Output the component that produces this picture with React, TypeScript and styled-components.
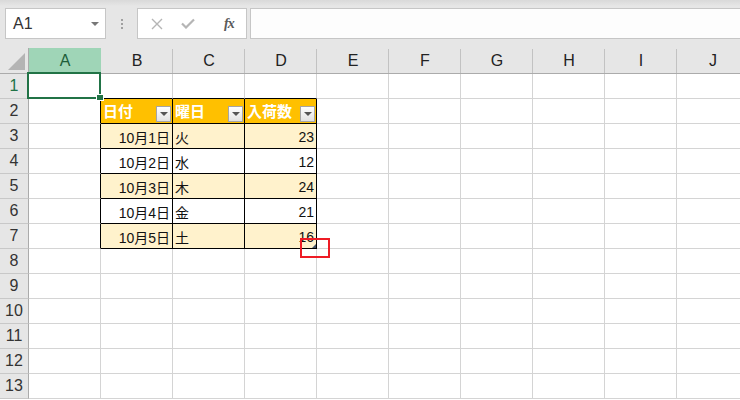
import React from "react";
import styled, { createGlobalStyle } from "styled-components";

const GlobalStyle = createGlobalStyle`
  html, body {
    margin: 0;
    padding: 0;
    background: #ffffff;
  }
  * {
    box-sizing: border-box;
  }
`;

const FONT = `"Liberation Sans", "Noto Sans CJK JP", sans-serif`;
const GRID = "#d4d4d4";
const HEAD_LINE = "#ababab";
const GREEN = "#217346";

const Window = styled.div`
  width: 740px;
  height: 400px;
  overflow: hidden;
  background: #ffffff;
  font-family: ${FONT};
`;

const Toolbar = styled.div`
  height: 48px;
  display: flex;
  align-items: flex-start;
  padding: 8px 0 0 5px;
  background: linear-gradient(#d9d9d9 0px, #e6e6e6 6px, #e6e6e6 100%);
`;

const NameBox = styled.div`
  width: 101px;
  height: 31px;
  background: #ffffff;
  border: 1px solid #c6c6c6;
  display: flex;
  align-items: center;
  justify-content: space-between;
  padding: 0 6px 0 7px;
  font-size: 16px;
  color: #333333;
`;

const DropArrow = styled.span`
  width: 0;
  height: 0;
  border-left: 4px solid transparent;
  border-right: 4px solid transparent;
  border-top: 4px solid #777777;
`;

const Grip = styled.div`
  width: 31px;
  height: 31px;
  display: flex;
  flex-direction: column;
  align-items: center;
  justify-content: center;
  gap: 2px;
  span {
    width: 2px;
    height: 2px;
    background: #a0a0a0;
  }
`;

const FormulaButtons = styled.div`
  width: 110px;
  height: 31px;
  background: #ffffff;
  border: 1px solid #c6c6c6;
  display: flex;
  align-items: center;
  padding-left: 13px;
  gap: 18px;
  margin-right: 3px;
`;

const FxLabel = styled.span`
  font-family: "Liberation Serif", serif;
  font-style: italic;
  font-weight: 700;
  font-size: 14px;
  color: #5a5a5a;
  margin-left: 11px;
  letter-spacing: -1px;
`;

const FormulaInput = styled.div`
  flex: 1;
  height: 31px;
  background: #fdfdfd;
  border: 1px solid #c6c6c6;
  border-right: none;
`;

const Sheet = styled.div`
  display: grid;
  grid-template-columns: 29px repeat(10, 72px);
  grid-template-rows: 26px repeat(13, 25px);
  background: #e6e6e6;
`;

const Corner = styled.div`
  background: #e6e6e6;
  border-right: 1px solid ${HEAD_LINE};
  border-bottom: 1px solid ${HEAD_LINE};
  display: flex;
  align-items: flex-end;
  justify-content: flex-end;
  padding: 0 3px 3px 0;
  &::before {
    content: "";
    width: 0;
    height: 0;
    border-left: 17px solid transparent;
    border-bottom: 17px solid #b4b4b4;
  }
`;

const ColHead = styled.div<{ $active?: boolean }>`
  position: relative;
  background: ${(p) => (p.$active ? "#9fd5b7" : "#e6e6e6")};
  border-bottom: 1px solid ${HEAD_LINE};
  display: flex;
  align-items: center;
  justify-content: center;
  font-size: 16px;
  padding-top: 1px;
  color: ${(p) => (p.$active ? "#1e5e3a" : "#222222")};
  &::after {
    content: "";
    position: absolute;
    right: 0;
    top: 1px;
    bottom: 0;
    width: 1px;
    background: ${(p) => (p.$active ? "#9fd5b7" : "#c2c2c2")};
  }
`;

const RowHead = styled.div<{ $active?: boolean }>`
  background: #e6e6e6;
  border-right: 1px solid ${HEAD_LINE};
  border-bottom: 1px solid #c8c8c8;
  display: flex;
  align-items: center;
  justify-content: center;
  font-size: 16px;
  color: ${(p) => (p.$active ? GREEN : "#333333")};
`;

const Cell = styled.div<{
  $bg: string;
  $right: string;
  $bottom: string;
  $align: "left" | "right";
  $head?: boolean;
}>`
  position: relative;
  background: ${(p) => p.$bg};
  border-right: 1px solid ${(p) => p.$right};
  border-bottom: 1px solid ${(p) => p.$bottom};
  display: flex;
  align-items: center;
  justify-content: ${(p) => (p.$align === "right" ? "flex-end" : "space-between")};
  padding: ${(p) => (p.$head ? "0 1px 1px 2px" : "1px 2px 0 2px")};
  font-size: ${(p) => (p.$head ? "15px" : "14px")};
  font-weight: ${(p) => (p.$head ? 700 : 400)};
  color: ${(p) => (p.$head ? "#ffffff" : "#111111")};
  white-space: nowrap;
`;

const FilterButton = styled.span`
  align-self: flex-end;
  width: 15px;
  height: 16px;
  border: 1px solid #a5a5a5;
  background: linear-gradient(#ffffff, #e2e2e2);
  display: flex;
  align-items: center;
  justify-content: center;
  &::before {
    content: "";
    width: 0;
    height: 0;
    border-left: 4px solid transparent;
    border-right: 4px solid transparent;
    border-top: 4px solid #555555;
  }
`;

const Selection = styled.span`
  position: absolute;
  left: -2px;
  top: -2px;
  right: -1px;
  bottom: -1px;
  border: 2px solid ${GREEN};
  z-index: 2;
  pointer-events: none;
`;

const FillHandle = styled.span`
  position: absolute;
  right: -4px;
  bottom: -3px;
  width: 6px;
  height: 5px;
  background: ${GREEN};
  border: 1px solid #ffffff;
  box-sizing: content-box;
  margin: -1px;
`;

const ResizeHandle = styled.span`
  position: absolute;
  right: 0;
  bottom: 0;
  width: 0;
  height: 0;
  border-left: 4px solid transparent;
  border-bottom: 4px solid #44546a;
  z-index: 2;
`;

const Callout = styled.span`
  position: absolute;
  left: 55px;
  top: 14px;
  width: 30px;
  height: 20px;
  border: 2px solid #ee1c25;
  z-index: 3;
`;

const COLS = ["A", "B", "C", "D", "E", "F", "G", "H", "I", "J"];
const ROWS = Array.from({ length: 13 }, (_, i) => i + 1);

const HEADERS = ["日付", "曜日", "入荷数"];
const DATA: [string, string, string][] = [
  ["10月1日", "火", "23"],
  ["10月2日", "水", "12"],
  ["10月3日", "木", "24"],
  ["10月4日", "金", "21"],
  ["10月5日", "土", "16"],
];

const inTable = (r: number, c: number) => r >= 2 && r <= 7 && c >= 1 && c <= 3;

const XIcon = () => (
  <svg width="12" height="12" viewBox="0 0 12 12">
    <path d="M1 1L11 11M11 1L1 11" stroke="#b5b5b5" strokeWidth="1.4" fill="none" />
  </svg>
);

const CheckIcon = () => (
  <svg width="14" height="11" viewBox="0 0 14 11">
    <path d="M1 5.5L5 9.5L13 1.5" stroke="#b5b5b5" strokeWidth="2.2" fill="none" />
  </svg>
);

const renderCell = (r: number, c: number) => {
  const table = inTable(r, c);
  const right = table || (c === 0 && r >= 2 && r <= 7) ? "#000000" : GRID;
  const bottom = table || (r === 1 && c >= 1 && c <= 3) ? "#000000" : GRID;
  let bg = "#ffffff";
  let text = "";
  let align: "left" | "right" = "left";
  const head = r === 2 && table;

  if (table) {
    const k = c - 1;
    if (r === 2) {
      bg = "#ffc000";
      text = HEADERS[k];
    } else {
      bg = r % 2 === 1 ? "#fff2cc" : "#ffffff";
      text = DATA[r - 3][k];
      align = k === 1 ? "left" : "right";
    }
  }

  return (
    <Cell key={`${r}-${c}`} $bg={bg} $right={right} $bottom={bottom} $align={align} $head={head}>
      <span>{text}</span>
      {head && <FilterButton />}
      {r === 1 && c === 0 && (
        <Selection>
          <FillHandle />
        </Selection>
      )}
      {r === 7 && c === 3 && (
        <>
          <ResizeHandle />
          <Callout />
        </>
      )}
    </Cell>
  );
};

const App = () => {
  return (
    <Window>
      <GlobalStyle />
      <Toolbar>
        <NameBox>
          <span>A1</span>
          <DropArrow />
        </NameBox>
        <Grip>
          <span />
          <span />
          <span />
        </Grip>
        <FormulaButtons>
          <XIcon />
          <CheckIcon />
          <FxLabel>fx</FxLabel>
        </FormulaButtons>
        <FormulaInput />
      </Toolbar>

      <Sheet>
        <Corner />
        {COLS.map((col, i) => (
          <ColHead key={col} $active={i === 0}>
            {col}
          </ColHead>
        ))}
        {ROWS.map((r) => (
          <React.Fragment key={r}>
            <RowHead $active={r === 1}>{r}</RowHead>
            {COLS.map((_, c) => renderCell(r, c))}
          </React.Fragment>
        ))}
      </Sheet>
    </Window>
  );
};

export default App;
